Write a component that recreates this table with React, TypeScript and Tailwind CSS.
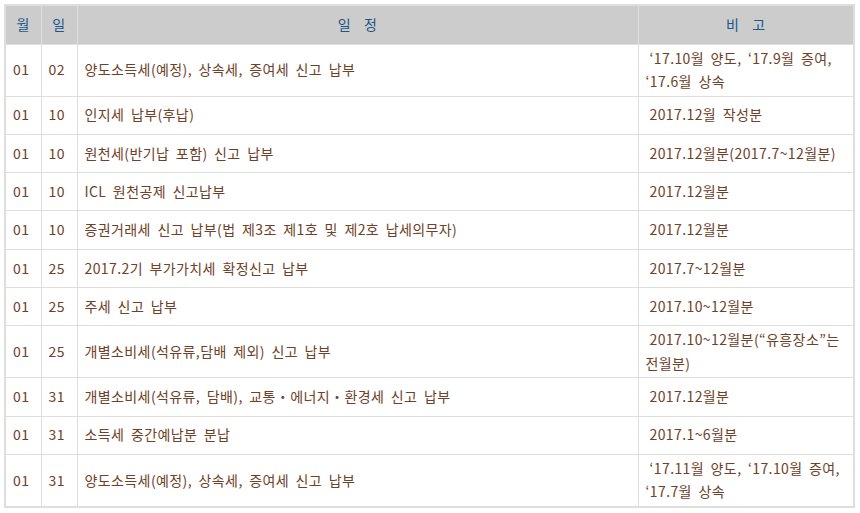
const Gap = () => <span className="inline-block w-[4px]" />;

const rows: { m: string; d: string; title: string; note: React.ReactNode }[] = [
  {
    m: '01',
    d: '02',
    title: '양도소득세(예정), 상속세, 증여세 신고 납부',
    note: (
      <>
        <Gap />‘17.10월 양도, ‘17.9월 증여,
        <br />
        ‘17.6월 상속
      </>
    ),
  },
  { m: '01', d: '10', title: '인지세 납부(후납)', note: <><Gap />2017.12월 작성분</> },
  { m: '01', d: '10', title: '원천세(반기납 포함) 신고 납부', note: <><Gap />2017.12월분(2017.7~12월분)</> },
  { m: '01', d: '10', title: 'ICL 원천공제 신고납부', note: <><Gap />2017.12월분</> },
  {
    m: '01',
    d: '10',
    title: '증권거래세 신고 납부(법 제3조 제1호 및 제2호 납세의무자)',
    note: <><Gap />2017.12월분</>,
  },
  { m: '01', d: '25', title: '2017.2기 부가가치세 확정신고 납부', note: <><Gap />2017.7~12월분</> },
  { m: '01', d: '25', title: '주세 신고 납부', note: <><Gap />2017.10~12월분</> },
  {
    m: '01',
    d: '25',
    title: '개별소비세(석유류,담배 제외) 신고 납부',
    note: (
      <>
        <Gap />2017.10~12월분(“유흥장소”는
        <br />
        전월분)
      </>
    ),
  },
  {
    m: '01',
    d: '31',
    title: '개별소비세(석유류, 담배), 교통・에너지・환경세 신고 납부',
    note: <><Gap />2017.12월분</>,
  },
  { m: '01', d: '31', title: '소득세 중간예납분 분납', note: <><Gap />2017.1~6월분</> },
  {
    m: '01',
    d: '31',
    title: '양도소득세(예정), 상속세, 증여세 신고 납부',
    note: (
      <>
        <Gap />‘17.11월 양도, ‘17.10월 증여,
        <br />
        ‘17.7월 상속
      </>
    ),
  },
];

export default function App() {
  const th = 'h-[39px] border border-[#dedede] bg-[#cccccc] font-normal text-[#1d5688] text-center';
  const td = 'h-[38.3px] border border-[#dedede] py-[2px] px-[7px] align-middle text-left whitespace-nowrap';

  return (
    <div className="bg-white w-[860px] h-[513px] pt-[4px] pl-[4px] font-['Noto_Sans_CJK_KR',sans-serif] text-[14px] leading-[23.5px] tracking-[0.4px] [word-spacing:3px] text-[#6e4128]">
      <table className="w-[849px] table-fixed border-collapse border-2 border-[#dedede]">
        <colgroup>
          <col className="w-[36px]" />
          <col className="w-[36px]" />
          <col className="w-[561px]" />
          <col className="w-[216px]" />
        </colgroup>
        <thead>
          <tr>
            <th className={th}>월</th>
            <th className={th}>일</th>
            <th className={th}>일&nbsp;&nbsp;정</th>
            <th className={th}>비&nbsp;&nbsp;고</th>
          </tr>
        </thead>
        <tbody>
          {rows.map((r, i) => (
            <tr key={i}>
              <td className={td}>{r.m}</td>
              <td className={td}>{r.d}</td>
              <td className={td}>{r.title}</td>
              <td className={td}>{r.note}</td>
            </tr>
          ))}
        </tbody>
      </table>
    </div>
  );
}
